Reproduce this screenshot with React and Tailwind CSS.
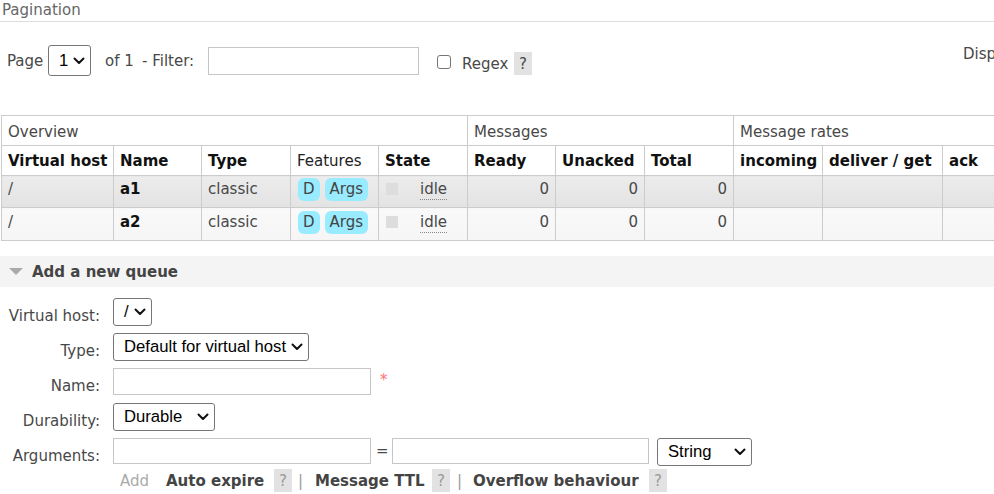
import React from 'react'

function Chevron() {
  return (
    <svg width="12" height="8" viewBox="0 0 12 8" fill="none" stroke="#111" strokeWidth="2" strokeLinecap="round" strokeLinejoin="round">
      <path d="M1.5 1.5 L6 6 L10.5 1.5" />
    </svg>
  )
}

function Select({ value, className }) {
  return (
    <div className={`flex items-center justify-between shrink-0 pl-[10px] pr-[5px] border border-[#767676] rounded-[3px] bg-white font-['Liberation_Sans',Arial,sans-serif] text-[16.67px] text-black ${className}`}>
      <span className="whitespace-nowrap">{value}</span>
      <Chevron />
    </div>
  )
}

function Help({ className }) {
  return (
    <span className={`inline-flex items-center justify-center shrink-0 w-[18px] h-[23px] bg-[#e2e2e2] ${className}`}>?</span>
  )
}

function FormRow({ label, h, children }) {
  return (
    <div className={`flex items-start ${h}`}>
      <div className="w-[100px] pt-[8px] text-right whitespace-nowrap">{label}</div>
      <div className="ml-[13px] flex items-start">{children}</div>
    </div>
  )
}

const queues = [
  { name: 'a1', cell: 'bg-linear-to-b from-[#ececec] to-[#e3e3e3] pt-[2px] pb-[6px]' },
  { name: 'a2', cell: 'bg-linear-to-b from-[#f9f9f9] to-[#f5f5f5] pt-[3px] pb-[6px]' },
]

const cols = [112, 88, 89, 88, 89, 88, 89, 89, 89, 120, 100]

export default function App() {
  return (
    <div className="w-[994px] h-[494px] overflow-hidden bg-white font-['DejaVu_Sans',Verdana,sans-serif] text-[15px] leading-[20px] text-[#484848]">
      <div className="w-[1240px]">
        <h2 className="h-[22px] pl-[2px] border-b border-[#dddddd] text-[15px] leading-[20px] font-normal text-[#666]">Pagination</h2>

        <div className="mt-[23px] h-[31px] flex items-center whitespace-nowrap">
          <span className="ml-[7px] w-[41px]">Page</span>
          <Select value="1" className="w-[43px] h-[31px]" />
          <span className="ml-[14px] w-[37px]">of 1</span>
          <span className="w-[66px]">- Filter:</span>
          <input className="w-[211px] h-[28px] border border-[#c6c6c6] bg-white" />
          <div className="ml-[18px] mt-[6px] flex items-center">
            <input type="checkbox" className="appearance-none -mt-[3px] w-[14px] h-[14px] border border-[#767676] rounded-[3px] bg-white" />
            <span className="ml-[11px] w-[52px] mt-[1px]">Regex</span>
            <Help className="w-[17px] text-[#484848]" />
          </div>
          <span className="ml-[431px] self-start -mt-[1px]">Displaying 2 items , page size up to:</span>
        </div>

        <table className="mt-[39px] ml-[1px] table-fixed border-collapse" style={{ width: cols.reduce((a, b) => a + b, 0) }}>
          <colgroup>
            {cols.map((w, i) => (
              <col key={i} style={{ width: w }} />
            ))}
          </colgroup>
          <thead>
            <tr className="text-left">
              <th colSpan={5} className="border border-[#cccccc] px-[6px] pt-[6px] pb-[2px] leading-[21px] font-normal">Overview</th>
              <th colSpan={3} className="border border-[#cccccc] px-[6px] pt-[6px] pb-[2px] leading-[21px] font-normal">Messages</th>
              <th colSpan={3} className="border border-[#cccccc] px-[6px] pt-[6px] pb-[2px] leading-[21px] font-normal">Message rates</th>
            </tr>
            <tr className="text-left whitespace-nowrap">
              <th className="border border-[#cccccc] px-[6px] pt-[5px] pb-[3px] leading-[21px] font-bold text-[#111]">Virtual host</th>
              <th className="border border-[#cccccc] px-[6px] pt-[5px] pb-[3px] leading-[21px] font-bold text-[#111]">Name</th>
              <th className="border border-[#cccccc] px-[6px] pt-[5px] pb-[3px] leading-[21px] font-bold text-[#111]">Type</th>
              <th className="border border-[#cccccc] px-[6px] pt-[5px] pb-[3px] leading-[21px] font-normal text-[#222]">Features</th>
              <th className="border border-[#cccccc] px-[6px] pt-[5px] pb-[3px] leading-[21px] font-bold text-[#111]">State</th>
              <th className="border border-[#cccccc] px-[6px] pt-[5px] pb-[3px] leading-[21px] font-bold text-[#111]">Ready</th>
              <th className="border border-[#cccccc] px-[6px] pt-[5px] pb-[3px] leading-[21px] font-bold text-[#111]">Unacked</th>
              <th className="border border-[#cccccc] px-[6px] pt-[5px] pb-[3px] leading-[21px] font-bold text-[#111]">Total</th>
              <th className="border border-[#cccccc] px-[6px] pt-[5px] pb-[3px] leading-[21px] font-bold text-[#111]">incoming</th>
              <th className="border border-[#cccccc] px-[6px] pt-[5px] pb-[3px] leading-[21px] font-bold text-[#111]">deliver / get</th>
              <th className="border border-[#cccccc] px-[6px] pt-[5px] pb-[3px] leading-[21px] font-bold text-[#111]">ack</th>
            </tr>
          </thead>
          <tbody>
            {queues.map((q) => (
              <tr key={q.name} className="leading-[23px] align-top whitespace-nowrap">
                <td className={`border border-[#cccccc] px-[6px] ${q.cell}`}>/</td>
                <td className={`border border-[#cccccc] px-[6px] font-bold text-[#111] ${q.cell}`}>{q.name}</td>
                <td className={`border border-[#cccccc] px-[6px] ${q.cell}`}>classic</td>
                <td className={`border border-[#cccccc] px-[7px] ${q.cell}`}>
                  <div className="flex">
                    <span className="h-[23px] px-[5px] rounded-[6px] bg-[#99ebff] text-[#444]">D</span>
                    <span className="ml-[5px] h-[23px] px-[5px] rounded-[6px] bg-[#99ebff] text-[#444]">Args</span>
                  </div>
                </td>
                <td className={`border border-[#cccccc] px-[7px] ${q.cell}`}>
                  <div className="flex items-center h-[23px]">
                    <span className="w-[12px] h-[12px] bg-[#dddddd] -mt-[2px]" />
                    <span className="ml-[22px] leading-[19px] border-b border-dotted border-[#888]">idle</span>
                  </div>
                </td>
                <td className={`border border-[#cccccc] px-[6px] text-right ${q.cell}`}>0</td>
                <td className={`border border-[#cccccc] px-[6px] text-right ${q.cell}`}>0</td>
                <td className={`border border-[#cccccc] px-[6px] text-right ${q.cell}`}>0</td>
                <td className={`border border-[#cccccc] px-[6px] ${q.cell}`}></td>
                <td className={`border border-[#cccccc] px-[6px] ${q.cell}`}></td>
                <td className={`border border-[#cccccc] px-[6px] ${q.cell}`}></td>
              </tr>
            ))}
          </tbody>
        </table>

        <div className="mt-[15px] h-[31px] bg-[#f4f4f4] flex items-center">
          <svg className="ml-[9px]" width="14" height="7" viewBox="0 0 14 7">
            <polygon points="0,0 14,0 7,7" fill="#aaaaaa" />
          </svg>
          <span className="ml-[9px] font-bold text-[#444]">Add a new queue</span>
        </div>

        <div className="mt-[11px]">
          <FormRow label="Virtual host:" h="h-[35px]">
            <Select value="/" className="w-[39px] h-[28px]" />
          </FormRow>
          <FormRow label="Type:" h="h-[35px]">
            <Select value="Default for virtual host" className="w-[196px] h-[28px]" />
          </FormRow>
          <FormRow label="Name:" h="h-[35px]">
            <input className="w-[258px] h-[27px] border border-[#c6c6c6] bg-white" />
            <span className="ml-[9px] mt-[2px] text-[#ff7070]">*</span>
          </FormRow>
          <FormRow label="Durability:" h="h-[35px]">
            <Select value="Durable" className="w-[102px] h-[28px]" />
          </FormRow>
          <FormRow label="Arguments:" h="h-[31px]">
            <input className="w-[258px] h-[26px] border border-[#c6c6c6] bg-white" />
            <span className="ml-[5px] w-[16px] leading-[26px]">=</span>
            <input className="w-[257px] h-[26px] border border-[#c6c6c6] bg-white" />
            <Select value="String" className="ml-[8px] w-[95px] h-[28px]" />
          </FormRow>
          <div className="flex items-center h-[23px] pl-[120px] whitespace-nowrap">
            <span className="w-[46px] text-[#aaaaaa]">Add</span>
            <span className="w-[108px] font-bold text-[#444]">Auto expire</span>
            <Help className="text-[#999]" />
            <span className="ml-[6px] w-[17px] text-[#999]">|</span>
            <span className="w-[117px] font-bold text-[#444]">Message TTL</span>
            <Help className="text-[#999]" />
            <span className="ml-[7px] w-[16px] text-[#999]">|</span>
            <span className="w-[176px] font-bold text-[#444]">Overflow behaviour</span>
            <Help className="text-[#999]" />
          </div>
        </div>
      </div>
    </div>
  )
}
